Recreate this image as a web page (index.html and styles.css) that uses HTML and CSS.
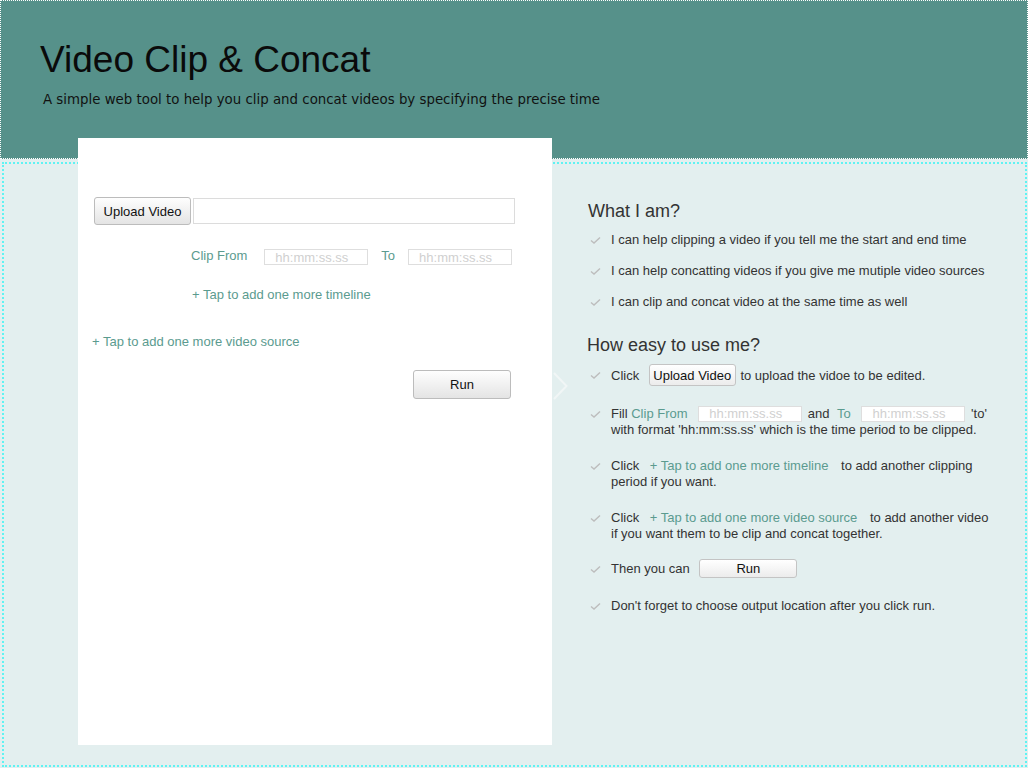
FILE: index.html
```html
<!DOCTYPE html>
<html>
<head>
<meta charset="utf-8">
<title>Video Clip &amp; Concat</title>
<link rel="stylesheet" href="styles.css">
</head>
<body>
<header class="hero">
  <h1 class="hero-title">Video Clip &amp; Concat</h1>
  <p class="hero-sub">A simple web tool to help you clip and concat videos by specifying the precise time</p>
</header>
<main class="stage">
  <section class="card">
    <div class="upload-row">
      <button class="btn btn-upload">Upload Video</button>
      <input class="path-input" type="text">
    </div>
    <div class="timeline">
      <div class="clip-row">
        <span class="teal">Clip From</span>
        <input class="time-input time-from" type="text" placeholder="hh:mm:ss.ss">
        <span class="teal to-label">To</span>
        <input class="time-input" type="text" placeholder="hh:mm:ss.ss">
      </div>
      <div class="link add-timeline">+ Tap to add one more timeline</div>
    </div>
    <div class="link add-source">+ Tap to add one more video source</div>
    <div class="run-row">
      <button class="btn btn-run">Run</button>
    </div>
  </section>
  <svg class="pointer" width="15" height="28" viewBox="0 0 15 28"><polyline points="1,1 13.5,14 1,27" fill="none" stroke="#f1f6f6" stroke-width="2"/></svg>
  <aside class="guide">
    <h2 class="guide-title">What I am?</h2>
    <ul class="list list-about">
      <li class="item"><svg class="check" width="11" height="16" viewBox="0 0 11 16"><polyline points="1,8.5 4,11 10,5.5" fill="none" stroke="#bdbdbd" stroke-width="1.4"/></svg><span class="txt">I can help clipping a video if you tell me the start and end time</span></li>
      <li class="item"><svg class="check" width="11" height="16" viewBox="0 0 11 16"><polyline points="1,8.5 4,11 10,5.5" fill="none" stroke="#bdbdbd" stroke-width="1.4"/></svg><span class="txt">I can help concatting videos if you give me mutiple video sources</span></li>
      <li class="item"><svg class="check" width="11" height="16" viewBox="0 0 11 16"><polyline points="1,8.5 4,11 10,5.5" fill="none" stroke="#bdbdbd" stroke-width="1.4"/></svg><span class="txt">I can clip and concat video at the same time as well</span></li>
    </ul>
    <h2 class="guide-title guide-title-2">How easy to use me?</h2>
    <ul class="list list-howto">
      <li class="item item-center"><svg class="check" width="11" height="16" viewBox="0 0 11 16"><polyline points="1,8.5 4,11 10,5.5" fill="none" stroke="#bdbdbd" stroke-width="1.4"/></svg><span class="txt">Click <button class="mini-btn mini-upload">Upload Video</button> to upload the vidoe to be edited.</span></li>
      <li class="item"><svg class="check" width="11" height="16" viewBox="0 0 11 16"><polyline points="1,8.5 4,11 10,5.5" fill="none" stroke="#bdbdbd" stroke-width="1.4"/></svg><span class="txt">Fill <span class="teal">Clip From</span> <input class="time-input mini-time" type="text" placeholder="hh:mm:ss.ss"> and <span class="teal to-inline">To</span> <input class="time-input mini-time" type="text" placeholder="hh:mm:ss.ss"> 'to' with format 'hh:mm:ss.ss' which is the time period to be clipped.</span></li>
      <li class="item"><svg class="check" width="11" height="16" viewBox="0 0 11 16"><polyline points="1,8.5 4,11 10,5.5" fill="none" stroke="#bdbdbd" stroke-width="1.4"/></svg><span class="txt">Click <span class="teal inline-link">+ Tap to add one more timeline</span> to add another clipping period if you want.</span></li>
      <li class="item"><svg class="check" width="11" height="16" viewBox="0 0 11 16"><polyline points="1,8.5 4,11 10,5.5" fill="none" stroke="#bdbdbd" stroke-width="1.4"/></svg><span class="txt">Click <span class="teal inline-link">+ Tap to add one more video source</span> to add another video if you want them to be clip and concat together.</span></li>
      <li class="item item-center item-run"><svg class="check" width="11" height="16" viewBox="0 0 11 16"><polyline points="1,8.5 4,11 10,5.5" fill="none" stroke="#bdbdbd" stroke-width="1.4"/></svg><span class="txt">Then you can <button class="mini-btn mini-run">Run</button></span></li>
      <li class="item"><svg class="check" width="11" height="16" viewBox="0 0 11 16"><polyline points="1,8.5 4,11 10,5.5" fill="none" stroke="#bdbdbd" stroke-width="1.4"/></svg><span class="txt">Don't forget to choose output location after you click run.</span></li>
    </ul>
  </aside>
</main>
</body>
</html>
```
FILE: styles.css
```css
* { box-sizing: border-box; }
html, body { margin: 0; padding: 0; }
body {
  width: 1028px;
  height: 768px;
  overflow: hidden;
  background: #e3efef;
  font-family: "Liberation Sans", Arial, sans-serif;
  color: #333;
}
.hero {
  width: 1028px;
  height: 159px;
  background: #56918a;
  border: 1px dotted #ffffff;
  padding: 38px 0 0 39px;
}
.hero-title {
  margin: 0;
  font-family: "Liberation Sans", Arial, sans-serif;
  font-weight: normal;
  font-size: 37px;
  line-height: 42px;
  color: #0a0a0a;
}
.hero-sub {
  margin: 10px 0 0 3px;
  font-family: "DejaVu Sans", sans-serif;
  font-size: 13.35px;
  line-height: 18px;
  color: #111;
}
.stage {
  margin: 3px 0 0 2px;
  width: 1025px;
  height: 605px;
  border: 2px dotted #5ff3f3;
  display: flex;
  align-items: flex-start;
}
.card {
  position: relative;
  z-index: 1;
  margin: -26px 0 0 74px;
  width: 474px;
  height: 607px;
  background: #fff;
  padding: 59px 16px 0 16px;
  font-size: 13px;
}
.upload-row {
  display: flex;
  align-items: center;
  height: 28px;
}
.btn {
  font-family: "Liberation Sans", Arial, sans-serif;
  font-size: 13px;
  color: #111;
  background: linear-gradient(#fefefe, #e4e4e4);
  border: 1px solid #bcbcbc;
  border-radius: 3px;
  padding: 0;
}
.btn-upload {
  width: 97px;
  height: 28px;
}
.path-input {
  margin-left: 2px;
  width: 322px;
  height: 26px;
  border: 1px solid #dcdcdc;
  background: #fff;
}
.timeline {
  margin-left: 97px;
}
.clip-row {
  margin-top: 24px;
  display: flex;
  align-items: center;
  height: 16px;
  line-height: 16px;
}
.teal { color: #5b9b8f; }
.clip-row .teal { position: relative; top: -1px; }
.time-input {
  width: 104px;
  height: 16px;
  border: 1px solid #dedede;
  padding: 0 0 0 10px;
  font-family: "Liberation Sans", Arial, sans-serif;
  font-size: 13px;
  color: #ccc;
  background: #fff;
}
.time-input::placeholder { color: #d0d0d0; }
.time-from { margin-left: 17px; }
.to-label { margin: 0 13px 0 13px; }
.link {
  color: #5b9b8f;
  line-height: 16px;
}
.add-timeline {
  margin-top: 22px;
  margin-left: 1px;
}
.add-source {
  margin-top: 31px;
  margin-left: -2px;
}
.run-row {
  margin-top: 20px;
  padding-left: 319px;
}
.btn-run {
  width: 98px;
  height: 29px;
}
.pointer {
  margin-top: 208px;
  margin-left: 1px;
  flex: none;
}
.guide {
  margin: 36px 0 0 20px;
  width: 407px;
}
.guide-title {
  margin: 0;
  font-weight: normal;
  font-size: 18px;
  line-height: 22px;
  color: #333;
}
.guide-title-2 {
  margin-top: 24px;
  margin-left: -1px;
}
.list {
  list-style: none;
  margin: 0;
  padding: 0;
  font-size: 13px;
  line-height: 16px;
}
.list-about { margin-top: 10px; }
.list-about .item + .item { margin-top: 15px; }
.list-howto { margin-top: 8px; }
.list-howto .item + .item { margin-top: 20px; }
.list-howto .item + .item-run { margin-top: 17px; }
.item {
  display: flex;
  align-items: flex-start;
}
.item-center { align-items: center; }
.check {
  flex: none;
  margin: 0 10px 0 2px;
}
.txt { flex: 1; }
.mini-btn {
  font-family: "Liberation Sans", Arial, sans-serif;
  font-size: 13px;
  color: #111;
  background: linear-gradient(#ffffff, #ececec);
  border: 1px solid #c4c4c4;
  border-radius: 3px;
  padding: 0;
}
.mini-upload {
  width: 87px;
  height: 22px;
  margin: 0 1px 0 6px;
}
.mini-run {
  width: 98px;
  height: 19px;
  margin-left: 6px;
}
.mini-time {
  vertical-align: middle;
  margin: -2px 2px 0 7px;
  height: 16px;
}
.to-inline { margin-left: 4px; }
.inline-link { margin: 0 9px 0 7px; }
```
